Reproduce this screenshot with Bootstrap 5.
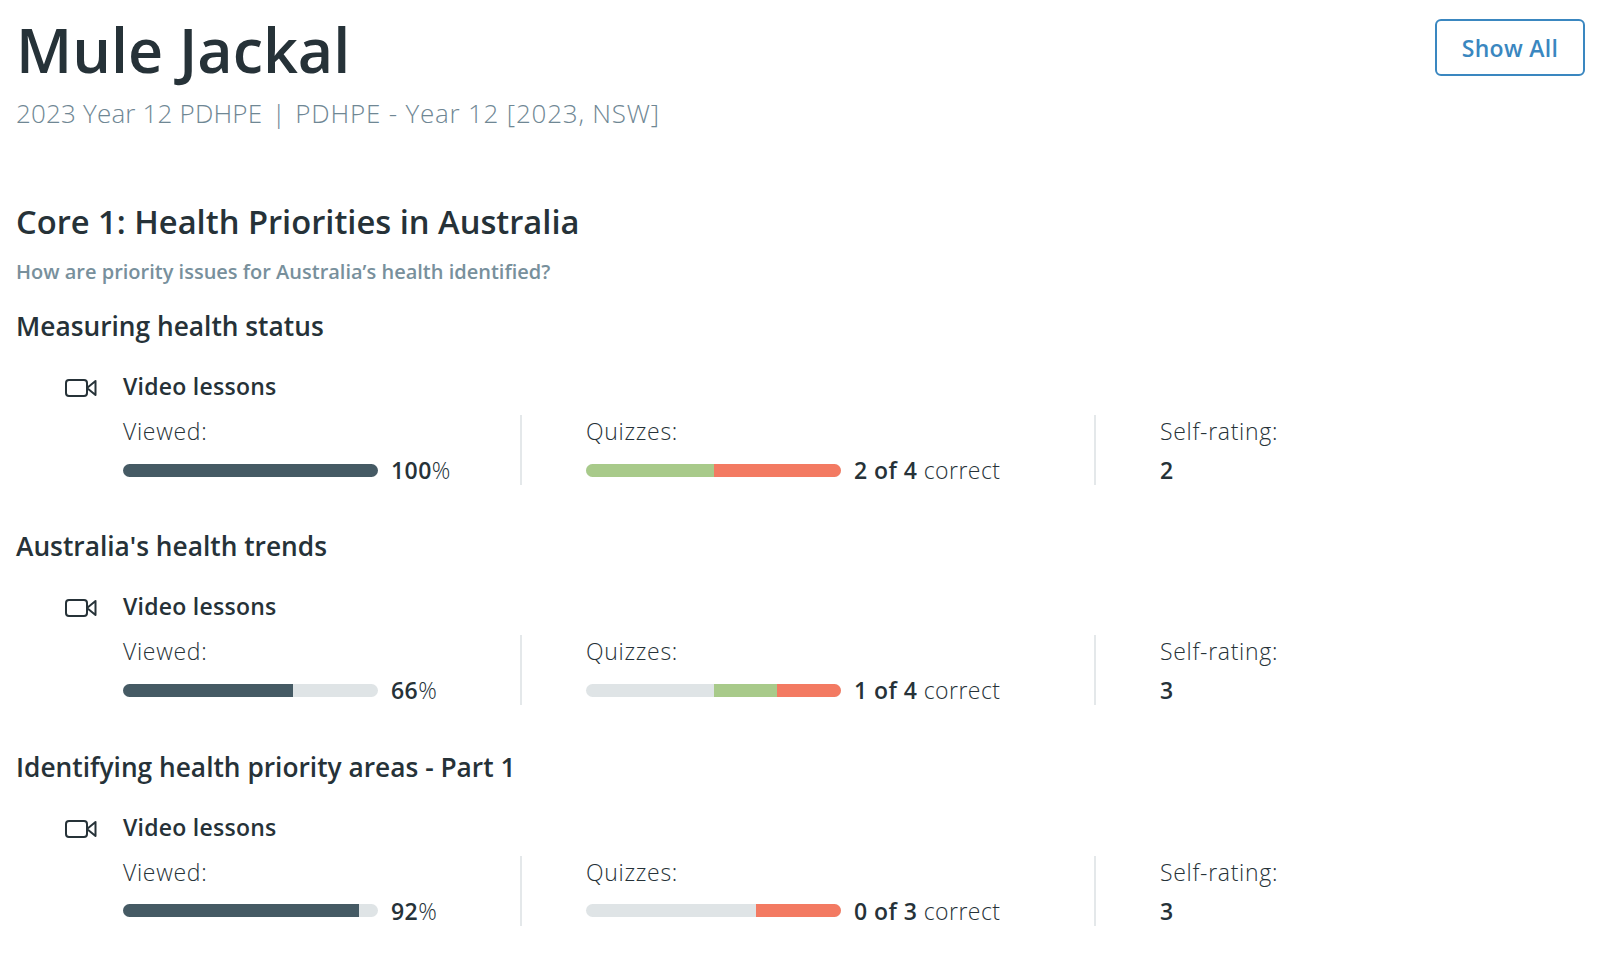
<!DOCTYPE html>
<html lang="en">
<head>
  <meta charset="UTF-8">
  <title>Mule Jackal</title>
  <link rel="stylesheet" href="https://cdn.jsdelivr.net/npm/bootstrap@5.3.0/dist/css/bootstrap.min.css">
  <style>
    body { font-family: "Open Sans", "Noto Sans", sans-serif; color: #263238; overflow: hidden; }
    .page-wrap { padding: 0 15px 0 16px; }
    .page-title { font-size: 61px; font-weight: 600; line-height: 76px; margin: 12px 0 0; color: #263238; }
    .page-sub { font-size: 26px; font-weight: 300; line-height: 34px; color: #6f8794; margin: 8px 0 0; }
    .sub-course { letter-spacing: .18px; }
    .sub-sep { margin: 0 9.5px; }
    .sub-subject { letter-spacing: .79px; }
    .show-btn { width: 150px; height: 57px; margin-top: 19px; border: 2px solid #3a87c0; border-radius: 6px; color: #3a87c0; font-size: 23px; font-weight: 600; letter-spacing: .3px; background: #fff; padding: 2px 0 0; }
    .core-title { font-size: 32.7px; font-weight: 600; line-height: 42px; margin: 71px 0 0; }
    .core-q { font-size: 20px; font-weight: 600; line-height: 26px; color: #78909c; margin: 16px 0 0; }
    .topic-title { font-size: 26.3px; font-weight: 600; line-height: 34px; margin: 0; }
    .topic { padding-top: 24px; height: 220.4px; }
    .lesson-head { height: 34px; margin-top: 26px; }
    .lesson-icon { width: 107px; padding-left: 49px; padding-top: 4px; }
    .lesson-name { font-size: 23px; font-weight: 600; letter-spacing: .25px; }
    .stats { margin: 12px 0 0 107px; height: 70px; }
    .stat-a { width: 397px; }
    .stat-b { width: 574px; padding-left: 64px; border-left: 2px solid #e4e8ea; }
    .stat-c { padding-left: 64px; border-left: 2px solid #e4e8ea; }
    .stat-label { font-size: 23px; font-weight: 300; line-height: 30px; letter-spacing: .7px; margin: 1px 0 9px; }
    .stat-value { font-size: 23px; font-weight: 300; line-height: 30px; letter-spacing: .45px; }
    .stat-value b { font-weight: 600; }
    .bar-track { width: 255px; height: 13px; border-radius: 7px; background: #dfe4e6; margin-right: 13px; }
    .bar-fill { background: #455a64; }
    .bar-good { background: #a8ca8a; }
    .bar-bad { background: #f37a62; }
  </style>
</head>
<body>
  <div class="page-wrap">
    <div class="d-flex justify-content-between align-items-start">
      <div>
        <h1 class="page-title">Mule Jackal</h1>
        <p class="page-sub"><span class="sub-course">2023 Year 12 PDHPE</span><span class="sub-sep">|</span><span class="sub-subject">PDHPE - Year 12 [2023, NSW]</span></p>
      </div>
      <button class="btn show-btn" type="button">Show All</button>
    </div>

    <h2 class="core-title">Core 1: Health Priorities in Australia</h2>
    <p class="core-q">How are priority issues for Australia’s health identified?</p>

    <!-- Measuring health status -->
    <div class="topic">
      <h3 class="topic-title">Measuring health status</h3>
      <div class="lesson-head d-flex align-items-center">
        <div class="lesson-icon">
          <svg width="32" height="18" viewBox="0 0 32 18" fill="none" stroke="#263238" stroke-width="2" stroke-linejoin="round" class="d-block"><rect x="1" y="1" width="21" height="16" rx="3"/><path d="M22 9 30.5 2V16Z"/></svg>
        </div>
        <div class="lesson-name">Video lessons</div>
      </div>
      <div class="stats d-flex">
        <div class="stat-a">
          <p class="stat-label">Viewed:</p>
          <div class="d-flex align-items-center">
            <div class="bar-track d-flex overflow-hidden"><div class="bar-fill" style="width:100%"></div></div>
            <div class="stat-value"><b>100</b>%</div>
          </div>
        </div>
        <div class="stat-b">
          <p class="stat-label">Quizzes:</p>
          <div class="d-flex align-items-center">
            <div class="bar-track d-flex overflow-hidden"><div class="bar-good" style="width:50%"></div><div class="bar-bad" style="width:50%"></div></div>
            <div class="stat-value"><b>2 of 4</b> correct</div>
          </div>
        </div>
        <div class="stat-c">
          <p class="stat-label">Self-rating:</p>
          <div class="stat-value"><b>2</b></div>
        </div>
      </div>
    </div>

    <!-- Australia's health trends -->
    <div class="topic">
      <h3 class="topic-title">Australia's health trends</h3>
      <div class="lesson-head d-flex align-items-center">
        <div class="lesson-icon">
          <svg width="32" height="18" viewBox="0 0 32 18" fill="none" stroke="#263238" stroke-width="2" stroke-linejoin="round" class="d-block"><rect x="1" y="1" width="21" height="16" rx="3"/><path d="M22 9 30.5 2V16Z"/></svg>
        </div>
        <div class="lesson-name">Video lessons</div>
      </div>
      <div class="stats d-flex">
        <div class="stat-a">
          <p class="stat-label">Viewed:</p>
          <div class="d-flex align-items-center">
            <div class="bar-track d-flex overflow-hidden"><div class="bar-fill" style="width:66.5%"></div></div>
            <div class="stat-value"><b>66</b>%</div>
          </div>
        </div>
        <div class="stat-b">
          <p class="stat-label">Quizzes:</p>
          <div class="d-flex align-items-center">
            <div class="bar-track d-flex overflow-hidden"><div style="width:50%"></div><div class="bar-good" style="width:25%"></div><div class="bar-bad" style="width:25%"></div></div>
            <div class="stat-value"><b>1 of 4</b> correct</div>
          </div>
        </div>
        <div class="stat-c">
          <p class="stat-label">Self-rating:</p>
          <div class="stat-value"><b>3</b></div>
        </div>
      </div>
    </div>

    <!-- Identifying health priority areas -->
    <div class="topic">
      <h3 class="topic-title">Identifying health priority areas - Part 1</h3>
      <div class="lesson-head d-flex align-items-center">
        <div class="lesson-icon">
          <svg width="32" height="18" viewBox="0 0 32 18" fill="none" stroke="#263238" stroke-width="2" stroke-linejoin="round" class="d-block"><rect x="1" y="1" width="21" height="16" rx="3"/><path d="M22 9 30.5 2V16Z"/></svg>
        </div>
        <div class="lesson-name">Video lessons</div>
      </div>
      <div class="stats d-flex">
        <div class="stat-a">
          <p class="stat-label">Viewed:</p>
          <div class="d-flex align-items-center">
            <div class="bar-track d-flex overflow-hidden"><div class="bar-fill" style="width:92.5%"></div></div>
            <div class="stat-value"><b>92</b>%</div>
          </div>
        </div>
        <div class="stat-b">
          <p class="stat-label">Quizzes:</p>
          <div class="d-flex align-items-center">
            <div class="bar-track d-flex overflow-hidden"><div style="width:66.6%"></div><div class="bar-bad" style="width:33.4%"></div></div>
            <div class="stat-value"><b>0 of 3</b> correct</div>
          </div>
        </div>
        <div class="stat-c">
          <p class="stat-label">Self-rating:</p>
          <div class="stat-value"><b>3</b></div>
        </div>
      </div>
    </div>
  </div>
  <script src="https://cdn.jsdelivr.net/npm/bootstrap@5.3.0/dist/js/bootstrap.bundle.min.js"></script>
</body>
</html>
